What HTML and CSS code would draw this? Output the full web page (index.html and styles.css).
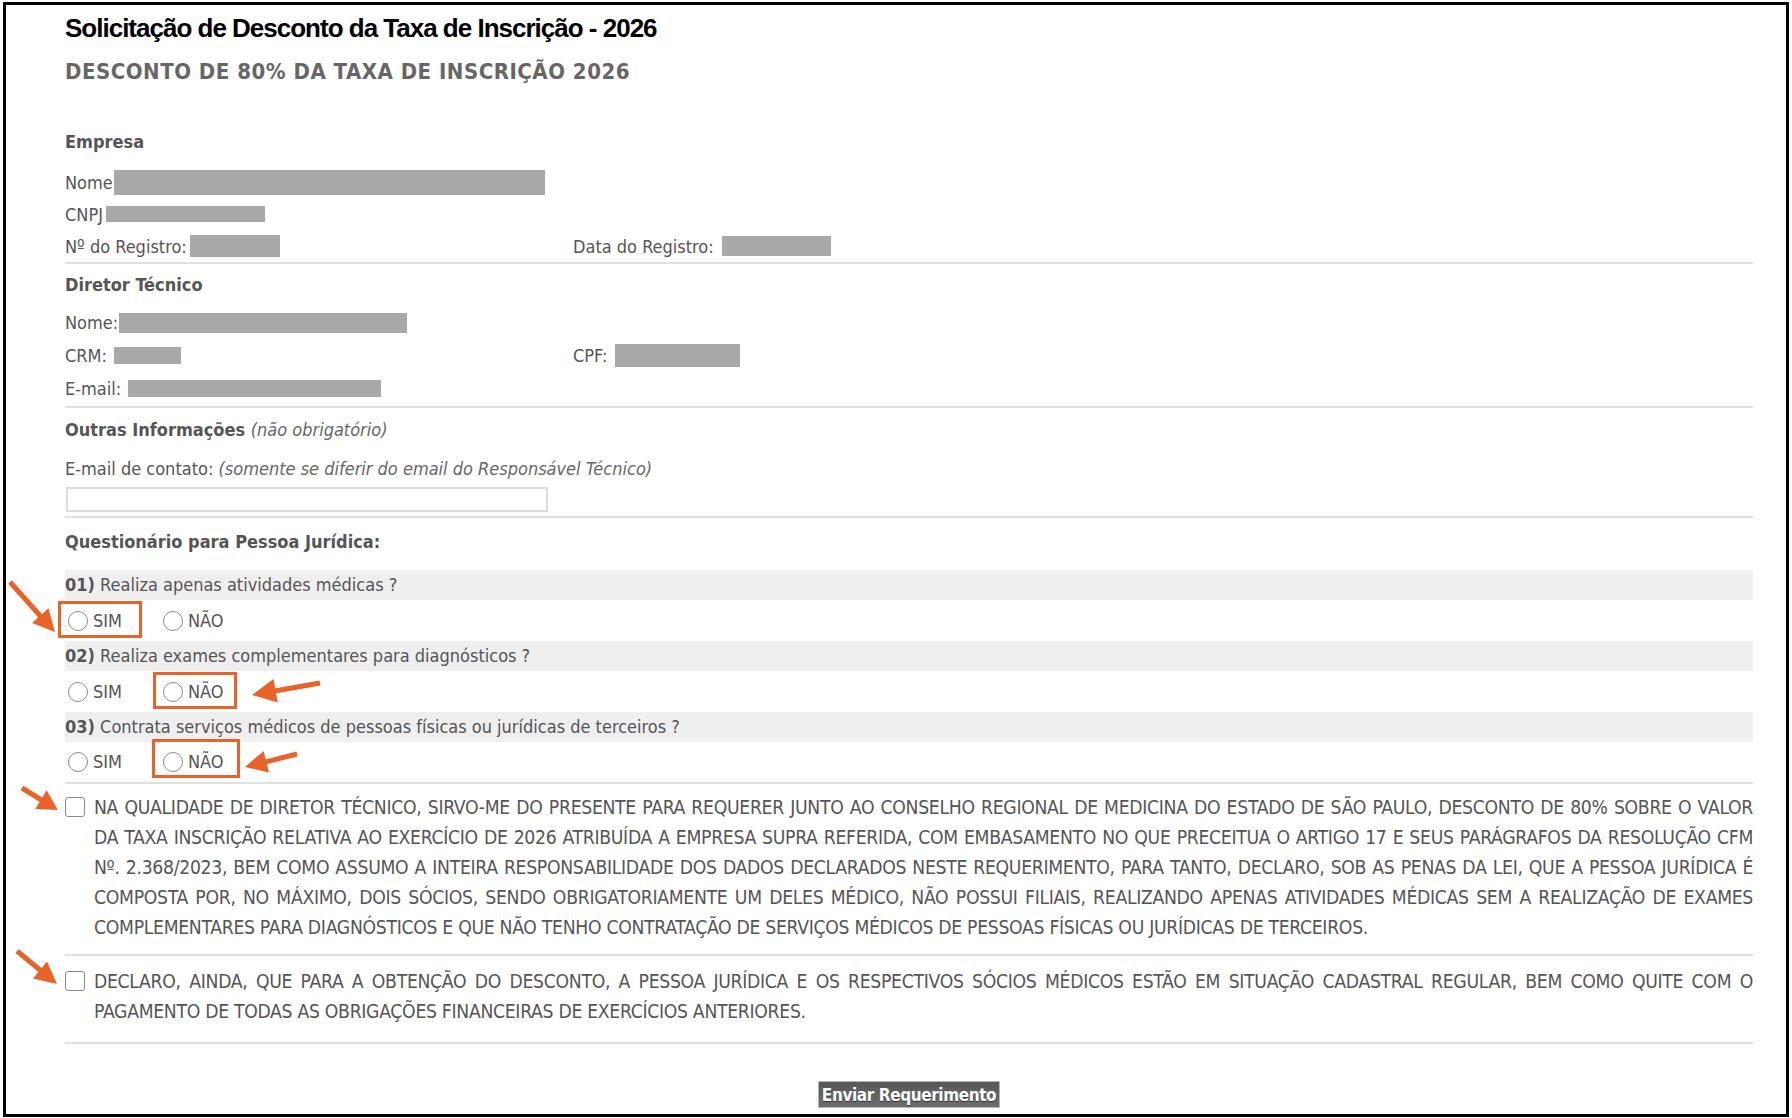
FILE: index.html
```html
<!DOCTYPE html>
<html lang="pt-BR">
<head>
<meta charset="utf-8">
<title>Solicitação de Desconto da Taxa de Inscrição - 2026</title>
<link rel="stylesheet" href="styles.css">
</head>
<body>
<div class="frame">
  <h1 class="title">Solicitação de Desconto da Taxa de Inscrição - 2026</h1>
  <h2 class="subtitle">DESCONTO DE 80% DA TAXA DE INSCRIÇÃO 2026</h2>

  <section class="sec sec-empresa">
    <div class="head">Empresa</div>
    <div class="rows rows-32">
      <div class="row">Nome<span class="redact r-emp-nome"></span></div>
      <div class="row">CNPJ<span class="redact r-cnpj"></span></div>
      <div class="row two">
        <div class="cell">Nº do Registro:<span class="redact r-reg"></span></div>
        <div class="cell">Data do Registro:<span class="redact r-data"></span></div>
      </div>
    </div>
  </section>

  <section class="sec sec-dir">
    <div class="head">Diretor Técnico</div>
    <div class="rows rows-33">
      <div class="row">Nome:<span class="redact r-dir-nome"></span></div>
      <div class="row two">
        <div class="cell">CRM:<span class="redact r-crm"></span></div>
        <div class="cell">CPF:<span class="redact r-cpf"></span></div>
      </div>
      <div class="row">E-mail:<span class="redact r-email"></span></div>
    </div>
  </section>

  <section class="sec sec-outras">
    <div class="head">Outras Informações <span class="note">(não obrigatório)</span></div>
    <div class="row contact">E-mail de contato:&nbsp;<span class="note">(somente se diferir do email do Responsável Técnico)</span></div>
    <input class="email-input" type="text">
  </section>

  <section class="sec sec-quest">
    <div class="head">Questionário para Pessoa Jurídica:</div>
    <div class="questions">
      <div class="q"><b>01)</b> Realiza apenas atividades médicas ?</div>
      <div class="opts">
        <label class="opt hl"><input class="radio" type="radio" name="q1">SIM
          <svg class="arrow a1" viewBox="5 577 55 60"><line x1="10" y1="582" x2="43" y2="619"/><polygon points="55,632 32.1,623.1 48.5,608.3"/></svg>
        </label>
        <label class="opt"><input class="radio" type="radio" name="q1">NÃO</label>
      </div>
      <div class="q"><b>02)</b> Realiza exames complementares para diagnósticos ?</div>
      <div class="opts">
        <label class="opt"><input class="radio" type="radio" name="q2">SIM</label>
        <label class="opt hl"><input class="radio" type="radio" name="q2">NÃO
          <svg class="arrow a2" viewBox="248 675 76 31"><line x1="320" y1="683" x2="272" y2="691.5"/><polygon points="252,695 273.5,679 277.7,702.6"/></svg>
        </label>
      </div>
      <div class="q"><b>03)</b> Contrata serviços médicos de pessoas físicas ou jurídicas de terceiros ?</div>
      <div class="opts last">
        <label class="opt"><input class="radio" type="radio" name="q3">SIM</label>
        <label class="opt hl hl-b"><input class="radio" type="radio" name="q3">NÃO
          <svg class="arrow a3" viewBox="241 747 60 29"><line x1="297" y1="754" x2="264" y2="762.3"/><polygon points="245,767 263.6,751 269,772.4"/></svg>
        </label>
      </div>
    </div>
  </section>

  <section class="sec decl decl-1">
    <label class="decl-row">
      <span class="cb-wrap"><input class="cb" type="checkbox">
        <svg class="arrow a4" viewBox="17 783 45 31"><line x1="22" y1="788" x2="43" y2="801"/><polygon points="58,810 35.2,809 46.6,790.2"/></svg>
      </span>
      <span class="decl-text">NA QUALIDADE DE DIRETOR TÉCNICO, SIRVO-ME DO PRESENTE PARA REQUERER JUNTO AO CONSELHO REGIONAL DE MEDICINA DO ESTADO DE SÃO PAULO, DESCONTO DE 80% SOBRE O VALOR DA TAXA INSCRIÇÃO RELATIVA AO EXERCÍCIO DE 2026 ATRIBUÍDA A EMPRESA SUPRA REFERIDA, COM EMBASAMENTO NO QUE PRECEITUA O ARTIGO 17 E SEUS PARÁGRAFOS DA RESOLUÇÃO CFM Nº. 2.368/2023, BEM COMO ASSUMO A INTEIRA RESPONSABILIDADE DOS DADOS DECLARADOS NESTE REQUERIMENTO, PARA TANTO, DECLARO, SOB AS PENAS DA LEI, QUE A PESSOA JURÍDICA É COMPOSTA POR, NO MÁXIMO, DOIS SÓCIOS, SENDO OBRIGATORIAMENTE UM DELES MÉDICO, NÃO POSSUI FILIAIS, REALIZANDO APENAS ATIVIDADES MÉDICAS SEM A REALIZAÇÃO DE EXAMES COMPLEMENTARES PARA DIAGNÓSTICOS E QUE NÃO TENHO CONTRATAÇÃO DE SERVIÇOS MÉDICOS DE PESSOAS FÍSICAS OU JURÍDICAS DE TERCEIROS.</span>
    </label>
  </section>

  <section class="sec decl decl-2">
    <label class="decl-row">
      <span class="cb-wrap"><input class="cb" type="checkbox">
        <svg class="arrow a5" viewBox="12 946 50 42"><line x1="17" y1="951" x2="43" y2="972.5"/><polygon points="57,984 33,978.5 47,961.5"/></svg>
      </span>
      <span class="decl-text">DECLARO, AINDA, QUE PARA A OBTENÇÃO DO DESCONTO, A PESSOA JURÍDICA E OS RESPECTIVOS SÓCIOS MÉDICOS ESTÃO EM SITUAÇÃO CADASTRAL REGULAR, BEM COMO QUITE COM O PAGAMENTO DE TODAS AS OBRIGAÇÕES FINANCEIRAS DE EXERCÍCIOS ANTERIORES.</span>
    </label>
  </section>

  <div class="actions">
    <button class="btn" type="button">Enviar Requerimento</button>
  </div>
</div>
</body>
</html>
```

FILE: styles.css
```css
*,
*::before,
*::after {
  box-sizing: border-box;
}

body {
  margin: 0;
  background: #fff;
  color: #555;
  font-family: "DejaVu Sans Condensed", "DejaVu Sans", sans-serif;
  font-stretch: condensed;
  font-size: 18px;
}

.frame {
  margin: 2px 3px 0;
  height: 1115px;
  border: 3px solid #000;
  padding: 0 33px 0 59px;
}

.title {
  margin: 8px 0 0;
  font-family: "Liberation Sans", Arial, sans-serif;
  font-size: 26px;
  line-height: 30px;
  font-weight: bold;
  letter-spacing: -1px;
  color: #000;
}

.subtitle {
  margin: 15px 0 0;
  font-size: 22px;
  line-height: 28px;
  font-weight: bold;
  letter-spacing: 0.5px;
  color: #666;
}

.sec {
  border-bottom: 2px solid #e0e0e0;
}

.head {
  font-weight: bold;
  line-height: 32px;
  height: 32px;
}

.note {
  font-style: italic;
  font-weight: normal;
  color: #666;
}

.row {
  display: flex;
  align-items: center;
}

.rows-32 .row {
  height: 32px;
}

.rows-33 .row {
  height: 33px;
}

.two {
  display: grid;
  grid-template-columns: 508px 1fr;
}

.cell {
  display: flex;
  align-items: center;
  height: 100%;
}

.redact {
  display: inline-block;
  background: #a8a8aa;
  margin-left: 2px;
}

.r-emp-nome { width: 431px; height: 25px; margin-left: 1px; }
.r-cnpj { width: 159px; height: 16px; margin-left: 3px; }
.r-reg { width: 90px; height: 22px; margin-left: 3px; }
.r-data { width: 109px; height: 20px; margin-left: 8px; }
.r-dir-nome { width: 288px; height: 20px; margin-left: 1px; }
.r-crm { width: 67px; height: 17px; margin-left: 7px; }
.r-cpf { width: 125px; height: 23px; margin-left: 8px; }
.r-email { width: 253px; height: 17px; margin-left: 7px; }

/* Empresa */
.sec-empresa {
  margin-top: 40px;
}

.sec-empresa .rows {
  margin-top: 8px;
}

/* Diretor */
.sec-dir {
  padding: 5px 0 1px;
}

.sec-dir .rows {
  margin-top: 5px;
}

/* Outras informações */
.sec-outras {
  padding: 6px 0 4px;
}

.contact {
  margin-top: 6px;
  height: 32px;
}

.email-input {
  display: block;
  margin: 3px 0 0 1px;
  width: 482px;
  height: 25px;
  border: 2px solid #dcdcdc;
  background: #fff;
  padding: 0 4px;
  font: inherit;
}

/* Questionário */
.sec-quest {
  padding-top: 8px;
}

.questions {
  margin-top: 12px;
}

.q {
  height: 30px;
  line-height: 30px;
  background: #efefef;
}

.q b {
  color: #555;
}

.opts {
  height: 41px;
  display: flex;
  align-items: center;
  padding-left: 3px;
}

.opts.last {
  height: 40px;
}

.opt {
  position: relative;
  display: inline-flex;
  align-items: center;
  gap: 5px;
  height: 22px;
  width: 95px;
  line-height: 22px;
}

.radio {
  appearance: none;
  -webkit-appearance: none;
  flex: none;
  width: 20px;
  height: 20px;
  margin: 0;
  border: 1.5px solid #8a8a8a;
  border-radius: 50%;
  background: #fff;
}

.hl::after {
  content: "";
  position: absolute;
  left: -10px;
  top: -9px;
  width: 84px;
  height: 37px;
  border: 3px solid #e8622a;
  pointer-events: none;
}

.hl-b::after {
  left: -11px;
  top: -12px;
  width: 88px;
  height: 39px;
}

.arrow {
  position: absolute;
  overflow: visible;
  pointer-events: none;
}

.arrow line {
  stroke: #e8622a;
  stroke-width: 5;
}

.arrow polygon {
  fill: #e8622a;
}

.a1 { left: -63px; top: -32.5px; width: 55px; height: 60px; }
.a2 { left: 85px; top: -5.5px; width: 76px; height: 31px; }
.a3 { left: 78px; top: -4.5px; width: 60px; height: 29px; }
.a4 { left: -48px; top: -14px; width: 45px; height: 31px; }
.a5 { left: -53px; top: -25px; width: 50px; height: 42px; }

/* Declarações */
.decl-1 {
  padding: 9px 0 11px;
}

.decl-2 {
  padding: 11px 0 15px;
}

.decl-row {
  display: flex;
  align-items: flex-start;
  gap: 9px;
}

.cb-wrap {
  position: relative;
  flex: none;
  width: 20px;
  height: 20px;
  margin-top: 4px;
}

.cb {
  appearance: none;
  -webkit-appearance: none;
  display: block;
  width: 20px;
  height: 20px;
  margin: 0;
  border: 1.5px solid #8a8a8a;
  border-radius: 3px;
  background: #fff;
}

.decl-text {
  flex: 1;
  font-size: 19.2px;
  line-height: 30px;
  letter-spacing: -0.3px;
  text-align: justify;
}

/* Botão */
.actions {
  margin-top: 37px;
  text-align: center;
}

.btn {
  width: 182px;
  height: 27px;
  padding: 0;
  border: 1px solid #b5b5b5;
  background: linear-gradient(to bottom, #585858, #6c6c6c);
  color: #fff;
  font-family: "DejaVu Sans Condensed", "DejaVu Sans", sans-serif;
  font-stretch: condensed;
  font-size: 17px;
  font-weight: bold;
  letter-spacing: -0.4px;
  text-shadow: 0 1px 0 #333;
}
```
